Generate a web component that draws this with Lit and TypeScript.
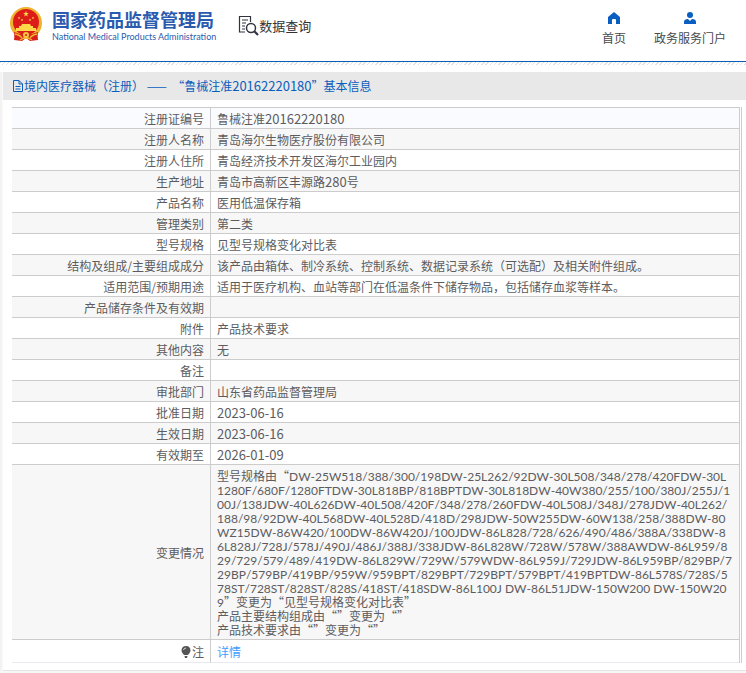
import { LitElement, html, css, svg } from "lit";
import { customElement } from "lit/decorators.js";

const CHANGES = [
  "型号规格由“DW-25W518/388/300/198DW-25L262/92DW-30L508/348/278/420FDW-30L",
  "1280F/680F/1280FTDW-30L818BP/818BPTDW-30L818DW-40W380/255/100/380J/255J/1",
  "00J/138JDW-40L626DW-40L508/420F/348/278/260FDW-40L508J/348J/278JDW-40L262/",
  "188/98/92DW-40L568DW-40L528D/418D/298JDW-50W255DW-60W138/258/388DW-80",
  "WZ15DW-86W420/100DW-86W420J/100JDW-86L828/728/626/490/486/388A/338DW-8",
  "6L828J/728J/578J/490J/486J/388J/338JDW-86L828W/728W/578W/388AWDW-86L959/8",
  "29/729/579/489/419DW-86L829W/729W/579WDW-86L959J/729JDW-86L959BP/829BP/7",
  "29BP/579BP/419BP/959W/959BPT/829BPT/729BPT/579BPT/419BPTDW-86L578S/728S/5",
  "78ST/728ST/828ST/828S/418ST/418SDW-86L100J DW-86L51JDW-150W200 DW-150W20",
  "9”变更为“见型号规格变化对比表”",
  "产品主要结构组成由“”变更为“”",
  "产品技术要求由“”变更为“”",
].join("\n");

const ROWS: [string, string][] = [
  ["注册证编号", "鲁械注准20162220180"],
  ["注册人名称", "青岛海尔生物医疗股份有限公司"],
  ["注册人住所", "青岛经济技术开发区海尔工业园内"],
  ["生产地址", "青岛市高新区丰源路280号"],
  ["产品名称", "医用低温保存箱"],
  ["管理类别", "第二类"],
  ["型号规格", "见型号规格变化对比表"],
  ["结构及组成/主要组成成分", "该产品由箱体、制冷系统、控制系统、数据记录系统（可选配）及相关附件组成。"],
  ["适用范围/预期用途", "适用于医疗机构、血站等部门在低温条件下储存物品，包括储存血浆等样本。"],
  ["产品储存条件及有效期", ""],
  ["附件", "产品技术要求"],
  ["其他内容", "无"],
  ["备注", ""],
  ["审批部门", "山东省药品监督管理局"],
  ["批准日期", "2023-06-16"],
  ["生效日期", "2023-06-16"],
  ["有效期至", "2026-01-09"],
];

/* Numbers are set one size up from the Chinese text; model names use a narrower face. */
const mixed = (text: string) =>
  text
    .split(/([\x21-\x7e][\x20-\x7e]*)/)
    .filter((part) => part !== "")
    .map((part) => (/^[\x21-\x7e]/.test(part) ? html`<span class="latin">${part}</span>` : part));

const star = (cx: number, cy: number, r: number) => {
  const points = Array.from({ length: 10 }, (_, i) => {
    const a = (Math.PI / 5) * i - Math.PI / 2;
    const d = i % 2 ? r * 0.4 : r;
    return `${(cx + d * Math.cos(a)).toFixed(2)},${(cy + d * Math.sin(a)).toFixed(2)}`;
  }).join(" ");
  return svg`<polygon points=${points} fill="#ffd84a"/>`;
};

@customElement("app-root")
export class AppRoot extends LitElement {
  static styles = css`
    :host {
      display: block;
      min-height: 100vh;
      background: #f7f7f7;
      color: #5c5c60;
      font: 12px/14px "Noto Sans CJK SC", sans-serif;
      text-spacing-trim: space-all;
    }
    * { box-sizing: border-box; }
    a { text-decoration: none; color: inherit; }
    svg { display: block; flex: none; }
    .latin { font-size: 13px; line-height: 0; }
    .changes .latin { font-family: Lato, sans-serif; font-size: 12px; font-kerning: none; }
    .top {
      display: flex;
      align-items: flex-start;
      height: 62px;
      padding: 0 20px 0 10px;
      background: #fff;
      border-bottom: 1px solid #0b5cb6;
    }
    .hatch {
      height: 10px;
      background:
        repeating-linear-gradient(135deg, #e2e2e2 0 1px, #fff 1px 3px) top / 100% 3px no-repeat,
        linear-gradient(#fff, #fff);
    }
    .brand { display: flex; gap: 10px; padding-top: 6px; color: #2b5bae; }
    .name { padding-top: 3px; white-space: nowrap; }
    .cn { display: block; font-weight: bold; font-size: 18px; line-height: 20px; }
    .en { display: block; font: 9px/16px Lato, sans-serif; }
    .query {
      display: flex;
      align-items: center;
      margin: 15px 0 0 22px;
      font-size: 13px;
      line-height: 20px;
      color: #333;
      white-space: nowrap;
    }
    nav { display: flex; gap: 28px; margin-left: auto; padding-top: 12px; white-space: nowrap; }
    .nav { display: flex; flex-direction: column; align-items: center; gap: 5px; line-height: 18px; color: #4a4a4a; }
    .content { padding-left: 3px; background: linear-gradient(90deg, #f3f3f3 0 2px, #fff 3px); }
    .panel { background: #fff; border-bottom: 1px solid #e4e4e4; padding-bottom: 7px; }
    h1 {
      display: flex;
      align-items: center;
      gap: 1px;
      margin: 0 0 7px;
      padding: 0 10px;
      height: 28px;
      background: #e8e8e8;
      color: #0a5ebd;
      font-size: 12px;
      font-weight: normal;
      white-space: pre;
    }
    .frame { margin: 0 4px 0 9px; border-right: 1px solid #ccccd2; padding-right: 1px; }
    table { width: 100%; border-collapse: separate; border-spacing: 0; table-layout: fixed; border-top: 1px solid #ccc; border-right: 1px solid #ccccd2; }
    .labels { width: 199px; }
    th, td { height: 21px; padding: 4px 6px 2px; border-bottom: 1px solid #ccc; font-weight: normal; }
    th { text-align: right; border-right: 1px solid #ccc; }
    td { text-align: left; }
    .changes { white-space: pre; }
    tr:nth-child(even) { background: #f7f7f7; }
    tr:first-child { background: #fafbfe; }
    tr.last { background: #fff; }
    .last th, .last td { height: 23px; border-bottom-color: #e8eaf0; }
    .note { display: flex; justify-content: flex-end; align-items: center; gap: 1px; }
    .more { color: #409eff; }
  `;

  render() {
    return html`
      <header class="top">
        <div class="brand">
          <svg width="32" height="36" viewBox="0 0 32 36" aria-hidden="true">
            <path d="M5 27 L27 27 L28 34 L20 35 L16 32 L12 35 L4 34Z" fill="#d8201c" />
            <circle cx="16" cy="17" r="16" fill="#f0b32e" />
            <circle cx="16" cy="16" r="13" fill="#dc1c18" />
            ${star(16, 8, 3)}${star(9, 12, 1.4)}${star(12, 14, 1.4)}${star(20, 14, 1.4)}${star(23, 12, 1.4)}
            <path d="M11 20 L12 18 H20 L21 20 H23 V22 H26 V25 H6 V22 H9 V20Z" fill="#ffd84a" />
            <path d="M4 26 Q16 31 28 26 L27 34 L20 33 L16 30 L12 33 L5 34Z" fill="#d8201c" />
            <path d="M5 28 Q10 29 12 32 M27 28 Q22 29 20 32 M10 34 L16 31 L22 34" fill="none" stroke="#f3b830" stroke-width="1.3" />
            <circle cx="16" cy="29" r="3" fill="#f6c640" />
            <circle cx="16" cy="29" r="1" fill="#dc1c18" />
          </svg>
          <div class="name">
            <span class="cn">国家药品监督管理局</span>
            <span class="en">National Medical Products Administration</span>
          </div>
        </div>
        <div class="query">
          <svg width="21" height="21" viewBox="0 0 21 21" fill="none" stroke="#333340" aria-hidden="true">
            <path d="M7 17H1.500V1.500H12.500V7" stroke-width="1.200" />
            <path d="M4 5h6M4 8h4M4 11h3M4 14h3" />
            <circle cx="13" cy="13" r="4.500" stroke-width="1.500" />
            <path d="M16.300 16.300L20 20" stroke-width="2.200" />
          </svg>
          <span>数据查询</span>
        </div>
        <nav>
          <a class="nav" href="#home">
            <svg width="12" height="12" viewBox="0 0 12 12" aria-hidden="true">
              <path d="M6 0L12 5V12H8V8Q8 7 7 7H5Q4 7 4 8V12H0V5Z" fill="#0a5ec2" />
            </svg>
            <span>首页</span>
          </a>
          <a class="nav" href="#portal">
            <svg width="12" height="12" viewBox="0 0 12 12" aria-hidden="true">
              <circle cx="6" cy="3" r="3" fill="#0a5ec2" />
              <path d="M0 12V10Q0 7 4 7L6 9L8 7Q12 7 12 10V12Z" fill="#0a5ec2" />
            </svg>
            <span>政务服务门户</span>
          </a>
        </nav>
      </header>
      <div class="hatch"></div>
      <main class="content">
        <section class="panel">
          <h1><svg width="10" height="12" viewBox="0 0 10 12" fill="none" stroke="#0a5ebd" aria-hidden="true"><path d="M.5 .5H6L9.500 4V11.500H.5Z M6 .5V4H9.500 M2.500 6.500h5M2.500 9h5" /></svg><span>${mixed("境内医疗器械（注册） ——  “鲁械注准20162220180”基本信息")}</span></h1>
          <div class="frame">
            <table>
              <colgroup><col class="labels" /><col /></colgroup>
              <tbody>
                ${ROWS.map(([label, value]) => html`<tr><th scope="row">${label}</th><td>${mixed(value)}</td></tr>`)}
                <tr><th scope="row">变更情况</th><td class="changes">${mixed(CHANGES)}</td></tr>
                <tr class="last">
                  <th scope="row"><span class="note"><svg width="10" height="12" viewBox="0 0 10 12" aria-hidden="true"><path d="M5 0C8 0 9.500 2 9.500 4.500C9.500 6.500 8 7.500 7 9H3C2 7.500 .5 6.500 .5 4.500C.5 2 2 0 5 0Z M3.500 10H6.500L6 12H4Z" fill="#555" /><path d="M2.500 4Q3 2 5 2" fill="none" stroke="#ddd" /></svg>注</span></th>
                  <td><a class="more" href="#detail">详情</a></td>
                </tr>
              </tbody>
            </table>
          </div>
        </section>
      </main>
    `;
  }
}
